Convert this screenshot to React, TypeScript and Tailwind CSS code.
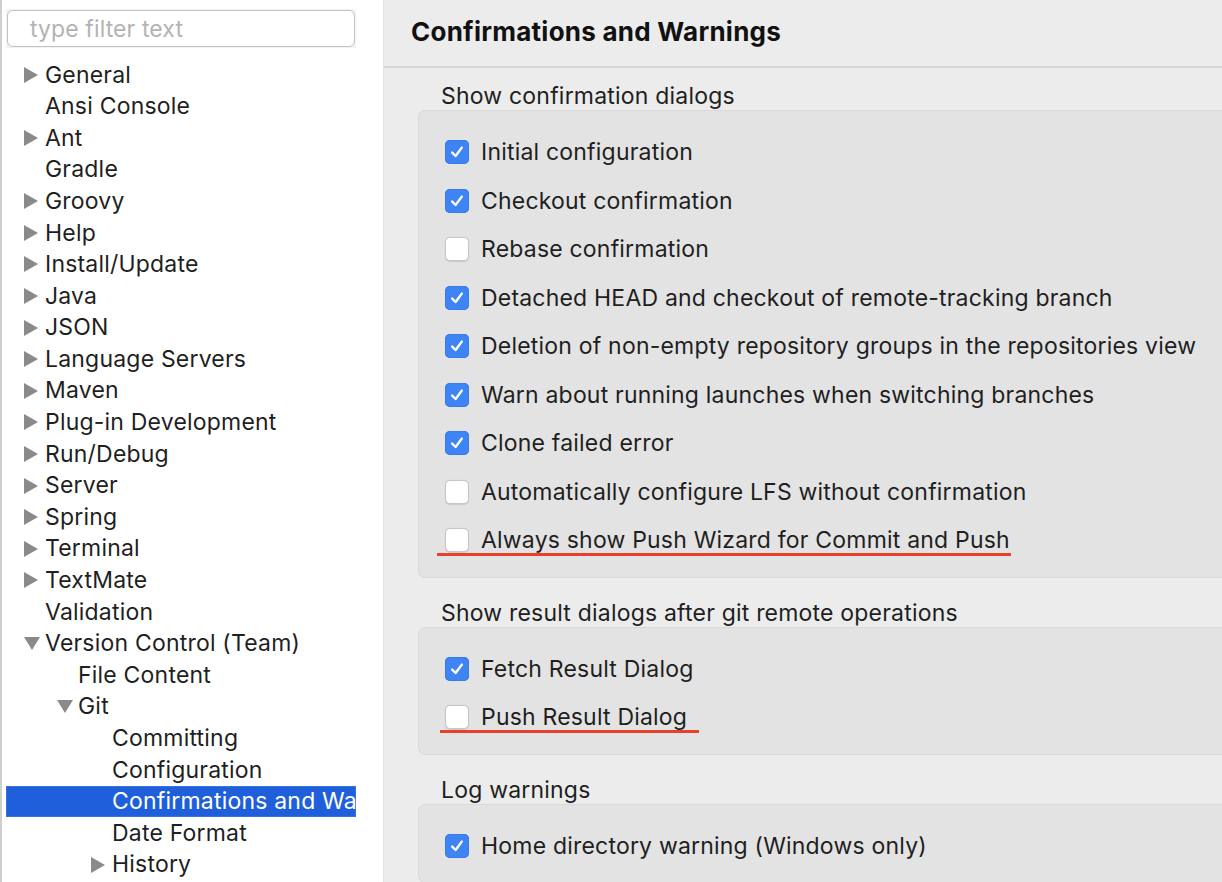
import React from "react";

type Node = { label: string; level: number; arrow?: "right" | "down"; selected?: boolean };

const tree: Node[] = [
  { label: "General", level: 0, arrow: "right" },
  { label: "Ansi Console", level: 0 },
  { label: "Ant", level: 0, arrow: "right" },
  { label: "Gradle", level: 0 },
  { label: "Groovy", level: 0, arrow: "right" },
  { label: "Help", level: 0, arrow: "right" },
  { label: "Install/Update", level: 0, arrow: "right" },
  { label: "Java", level: 0, arrow: "right" },
  { label: "JSON", level: 0, arrow: "right" },
  { label: "Language Servers", level: 0, arrow: "right" },
  { label: "Maven", level: 0, arrow: "right" },
  { label: "Plug-in Development", level: 0, arrow: "right" },
  { label: "Run/Debug", level: 0, arrow: "right" },
  { label: "Server", level: 0, arrow: "right" },
  { label: "Spring", level: 0, arrow: "right" },
  { label: "Terminal", level: 0, arrow: "right" },
  { label: "TextMate", level: 0, arrow: "right" },
  { label: "Validation", level: 0 },
  { label: "Version Control (Team)", level: 0, arrow: "down" },
  { label: "File Content", level: 1 },
  { label: "Git", level: 1, arrow: "down" },
  { label: "Committing", level: 2 },
  { label: "Configuration", level: 2 },
  { label: "Confirmations and Warnings", level: 2, selected: true },
  { label: "Date Format", level: 2 },
  { label: "History", level: 2, arrow: "right" },
];

const indents = ["pl-[18px]", "pl-[51px]", "pl-[85px]"];

function Arrow({ dir }: { dir: "right" | "down" }) {
  if (dir === "right")
    return (
      <svg width="14" height="16" viewBox="0 0 14 16">
        <polygon points="0,0 14,8 0,16" fill="#8a8a8a" />
      </svg>
    );
  return (
    <svg width="16" height="13" viewBox="0 0 16 13">
      <polygon points="0,0 16,0 8,13" fill="#8a8a8a" />
    </svg>
  );
}

function Checkbox({ checked }: { checked: boolean }) {
  if (checked)
    return (
      <span className="flex h-[24px] w-[24px] shrink-0 items-center justify-center rounded-[5px] bg-[#3e84f5] shadow-[inset_0_0_0_1px_#3a79e6]">
        <svg width="16" height="16" viewBox="0 0 16 16">
          <path d="M3.2 8.6 L6.6 12 L12.8 3.6" fill="none" stroke="#fff" strokeWidth="2.4" strokeLinecap="round" strokeLinejoin="round" />
        </svg>
      </span>
    );
  return (
    <span className="h-[24px] w-[24px] shrink-0 rounded-[5px] border border-[#c6c6c6] bg-white shadow-[0_0.5px_1px_rgba(0,0,0,0.12)]" />
  );
}

type Item = { label: string; checked: boolean; mark?: { l: string; r: string } };

function Row({ item }: { item: Item }) {
  return (
    <div className="flex h-[48.5px] items-center pl-[26px]">
      <div className="relative flex items-center gap-[12px]">
        <Checkbox checked={item.checked} />
        <span className="whitespace-nowrap leading-[28px]">{item.label}</span>
        {item.mark && (
          <span className={`absolute bottom-[-1.5px] h-[3px] bg-[#e8412b] ${item.mark.l} ${item.mark.r}`} />
        )}
      </div>
    </div>
  );
}

function Group({ title, items, first }: { title: string; items: Item[]; first?: boolean }) {
  return (
    <div className={first ? "mt-[14px]" : "mt-[21px]"}>
      <div className="h-[28px] pl-[57px] leading-[28px]">{title}</div>
      <div className="ml-[34px] mr-[-20px] rounded-[7px] border border-[#d9d9d9] bg-[#e3e3e3] pb-[12px] pt-[17px]">
        {items.map((it) => (
          <Row key={it.label} item={it} />
        ))}
      </div>
    </div>
  );
}

export default function App() {
  return (
    <div
      className="flex h-[882px] w-[1222px] overflow-hidden text-[23px] tracking-[0.2px] text-[#1f1f1f]"
      style={{ fontFamily: "Inter, 'Noto Sans', sans-serif" }}
    >
      <div className="flex w-[384px] shrink-0 flex-col border-l-[2px] border-r border-l-[#cfcfcf] border-r-[#e2e2e2] bg-white">
        <div className="ml-[4px] mt-[9px] w-[350px] bg-[#f2f2f2] p-px">
          <div className="flex h-[37px] items-center rounded-[6px] border border-[#c3c3c3] bg-white pl-[22px] pt-[1px] text-[23px] tracking-[0.1px] text-[#b3b3b3]">
            type filter text
          </div>
        </div>
        <div className="ml-[4px] mt-[11px] w-[350px] overflow-hidden">
          {tree.map((n) => (
            <div
              key={n.label}
              className={`flex h-[31.6px] items-center whitespace-nowrap ${indents[n.level]} ${
                n.selected ? "bg-[#1f5fdb] text-white shadow-[inset_0_0_0_1px_#3a74e2]" : ""
              }`}
            >
              <span className="flex w-[21px] shrink-0 items-center">
                {n.arrow && <Arrow dir={n.arrow} />}
              </span>
              <span>{n.label}</span>
            </div>
          ))}
        </div>
      </div>
      <div className="min-w-0 flex-1 bg-[#ececec]">
        <div className="h-[68px] border-b-2 border-[#d5d5d5] pl-[27px] text-[26px] font-bold leading-[64px] tracking-[0.25px] text-[#111]">
          Confirmations and Warnings
        </div>
        <Group
          first
          title="Show confirmation dialogs"
          items={[
            { label: "Initial configuration", checked: true },
            { label: "Checkout confirmation", checked: true },
            { label: "Rebase confirmation", checked: false },
            { label: "Detached HEAD and checkout of remote-tracking branch", checked: true },
            { label: "Deletion of non-empty repository groups in the repositories view", checked: true },
            { label: "Warn about running launches when switching branches", checked: true },
            { label: "Clone failed error", checked: true },
            { label: "Automatically configure LFS without confirmation", checked: false },
            { label: "Always show Push Wizard for Commit and Push", checked: false, mark: { l: "left-[-8px]", r: "right-[-1px]" } },
          ]}
        />
        <Group
          title="Show result dialogs after git remote operations"
          items={[
            { label: "Fetch Result Dialog", checked: true },
            { label: "Push Result Dialog", checked: false, mark: { l: "left-[-5px]", r: "right-[-12px]" } },
          ]}
        />
        <Group title="Log warnings" items={[{ label: "Home directory warning (Windows only)", checked: true }]} />
      </div>
    </div>
  );
}
